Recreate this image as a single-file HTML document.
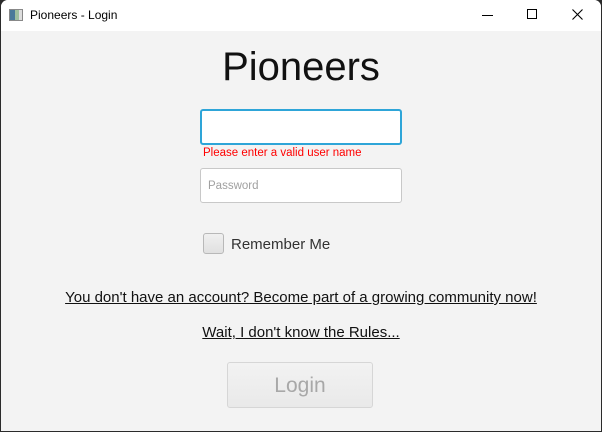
<!DOCTYPE html>
<html><head><style>
*{margin:0;padding:0;box-sizing:border-box}
body{width:602px;height:432px;overflow:hidden;background:#2b2b2b;font-family:"Liberation Sans",sans-serif;position:relative}
.win{position:absolute;left:1px;top:0;width:600px;height:431px;background:#f3f3f3;border-radius:7px 7px 0 0;overflow:hidden}
.tb{position:absolute;left:0;top:0;width:600px;height:31px;background:#fff}
.abs{position:absolute}
</style></head><body>
<div class="win">
<div class="tb">
 <div class="abs" style="left:8px;top:9px;width:14px;height:12px;border:1px solid #888;background:linear-gradient(90deg,#4a7a9a 0 40%,#9fc0a0 40% 75%,#ddd 75%)"></div>
 <div class="abs" style="left:29px;top:8px;font-size:12px;color:#000">Pioneers - Login</div>
 <div class="abs" style="left:481px;top:15px;width:11px;height:1px;background:#000"></div>
 <div class="abs" style="left:526px;top:9px;width:10px;height:10px;border:1px solid #000"></div>
 <svg class="abs" style="left:571px;top:9px" width="11" height="11"><path d="M0.5 0.5L10.5 10.5M10.5 0.5L0.5 10.5" stroke="#000" stroke-width="1.1"/></svg>
</div>
<div class="abs" style="left:0;width:600px;top:45px;text-align:center;font-size:40px;color:#111">Pioneers</div>
<div class="abs" style="left:199px;top:109px;width:202px;height:36px;background:#fff;border:2px solid #2ea5d8;border-radius:3px"></div>
<div class="abs" style="left:202px;top:147px;font-size:11.5px;color:#f00">Please enter a valid user name</div>
<div class="abs" style="left:199px;top:168px;width:202px;height:35px;background:#fff;border:1px solid #c8c8c8;border-radius:3px"></div>
<div class="abs" style="left:207px;top:180px;font-size:11.5px;color:#a0a0a0">Password</div>
<div class="abs" style="left:202px;top:233px;width:21px;height:21px;border:1px solid #b8b8b8;border-radius:3px;background:linear-gradient(#f0f0f0,#e0e0e0)"></div>
<div class="abs" style="left:230px;top:236px;font-size:15px;color:#333">Remember Me</div>
<div class="abs" style="left:0;width:600px;top:289px;text-align:center;font-size:15px;color:#111;text-decoration:underline">You don't have an account? Become part of a growing community now!</div>
<div class="abs" style="left:0;width:600px;top:324px;text-align:center;font-size:15px;color:#111;text-decoration:underline">Wait, I don't know the Rules...</div>
<div class="abs" style="left:226px;top:362px;width:146px;height:46px;border:1px solid #d6d6d6;border-radius:3px;background:linear-gradient(#f2f2f2,#e9e9e9);text-align:center;line-height:46px;font-size:21px;color:#a8a8a8">Login</div>
</div>
</body></html>
